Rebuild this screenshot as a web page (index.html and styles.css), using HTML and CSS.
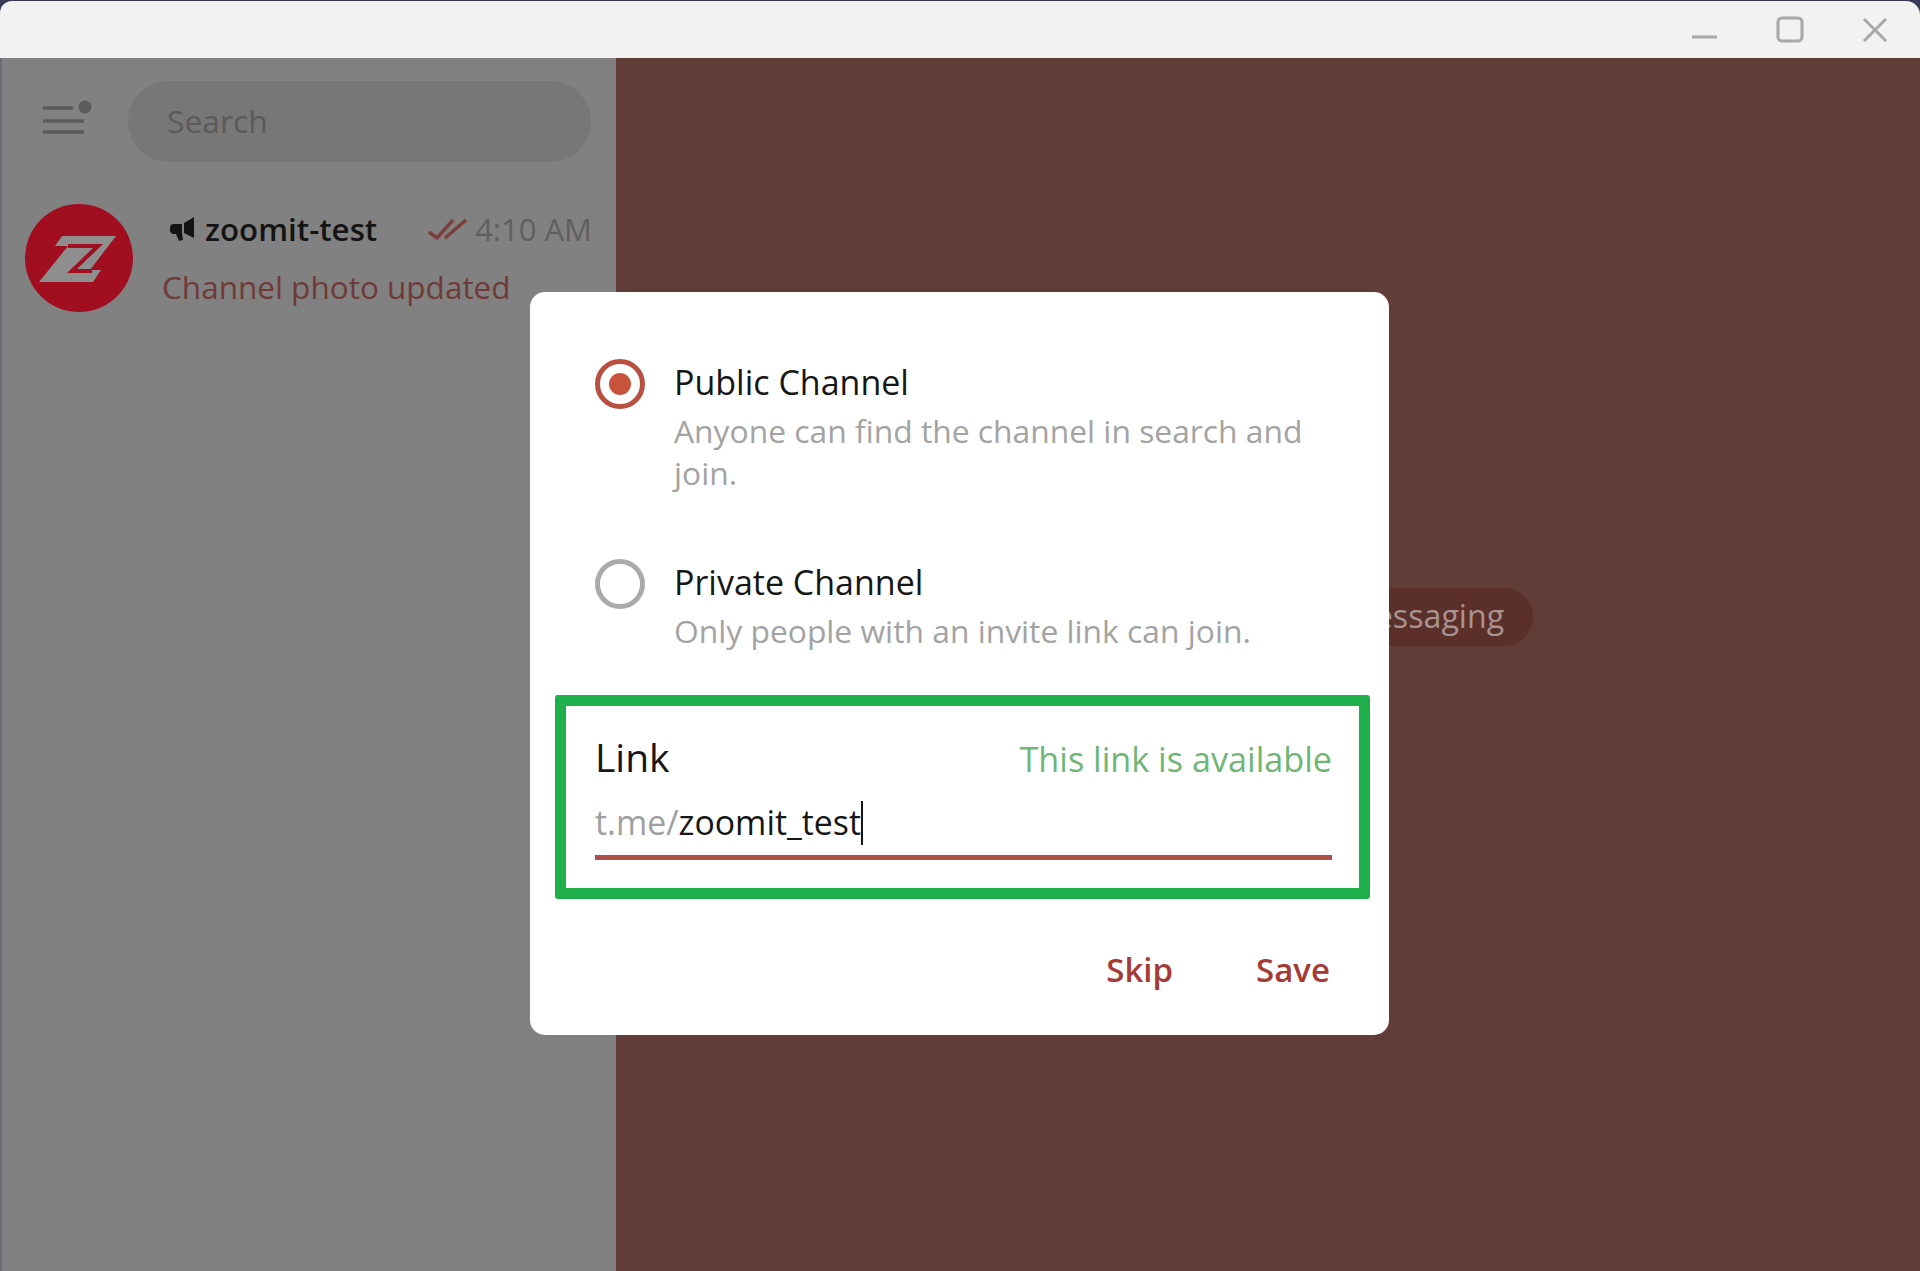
FILE: index.html
```html
<!DOCTYPE html>
<html lang="en">
<head>
<meta charset="utf-8">
<title>Telegram - Channel type</title>
<link rel="stylesheet" href="styles.css">
</head>
<body>
<div class="window">
  <header class="titlebar">
    <button class="win-btn" aria-label="Minimize"><svg width="28" height="28" viewBox="0 0 28 28"><path d="M1 21H26" class="win-stroke"/></svg></button>
    <button class="win-btn" aria-label="Maximize"><svg width="28" height="28" viewBox="0 0 28 28"><rect x="2" y="2" width="24" height="23" rx="4" class="win-stroke"/></svg></button>
    <button class="win-btn" aria-label="Close"><svg width="28" height="28" viewBox="0 0 28 28"><path d="M3 3L25 25M25 3L3 25" class="win-stroke"/></svg></button>
  </header>
  <div class="content">
    <aside class="sidebar">
      <div class="topbar">
        <svg class="menu-icon" width="50" height="40" viewBox="0 0 50 40"><path d="M0 9H30M0 22H41M0 33H41" class="menu-lines"/><circle cx="42" cy="8" r="6.5" class="menu-dot"/></svg>
        <div class="search">Search</div>
      </div>
      <div class="chat-row">
        <svg class="avatar" width="108" height="108" viewBox="0 0 108 108">
          <circle cx="54" cy="54" r="54" class="avatar-bg"/>
          <path d="M37 32H91L65 66H76L68 78H14L43 42H30Z" class="avatar-z"/>
          <path d="M43 42H73L47 67H67" class="avatar-line"/>
        </svg>
        <div class="chat-text">
          <div class="chat-head">
            <svg class="channel-icon" width="26" height="26" viewBox="0 0 26 26"><path d="M25 1V22L15 17V7Z" class="icon-dark"/><path d="M1 12a4 4 0 0 1 4-4h8v10H5a4 4 0 0 1-4-4Z" class="icon-dark"/><path d="M7 18h6l1 6-4 1Z" class="icon-dark"/></svg>
            <span class="chat-name">zoomit-test</span>
            <svg class="checks" width="40" height="24" viewBox="0 0 40 24"><path d="M1 15L9 21 25 3M17 21L38 3" class="check-lines"/></svg>
            <span class="chat-time">4:10 AM</span>
          </div>
          <div class="chat-preview">Channel photo updated</div>
        </div>
      </div>
    </aside>
    <main class="main">
      <span class="service-pill">Select a chat to start messaging</span>
    </main>
  </div>
  <section class="dialog">
    <div class="option option-first">
      <span class="radio radio-on"></span>
      <div>
        <div class="option-title">Public Channel</div>
        <div class="option-desc">Anyone can find the channel in search and join.</div>
      </div>
    </div>
    <div class="option option-second">
      <span class="radio"></span>
      <div>
        <div class="option-title">Private Channel</div>
        <div class="option-desc">Only people with an invite link can join.</div>
      </div>
    </div>
    <div class="link-box">
      <div class="link-head">
        <span class="link-label">Link</span>
        <span class="link-status">This link is available</span>
      </div>
      <div class="link-field"><span class="link-prefix">t.me/</span><span class="link-value">zoomit_test</span><span class="caret"></span></div>
    </div>
    <div class="actions">
      <button class="action">Skip</button>
      <button class="action">Save</button>
    </div>
  </section>
</div>
</body>
</html>
```
FILE: styles.css
```css
* { box-sizing: border-box; }
html, body { margin: 0; height: 100%; overflow: hidden; background: #3a3a58; }
body { font-family: "Open Sans", "Noto Sans", sans-serif; }
.window { position: relative; width: 1920px; height: 1271px; display: flex; flex-direction: column; padding-top: 1px; }

.titlebar { height: 57px; flex: none; background: #f2f2f2; border-radius: 12px 14px 0 0; display: flex; justify-content: flex-end; align-items: flex-start; padding: 15px 31px 0 0; gap: 57px; }
.win-btn { width: 28px; height: 28px; padding: 0; border: 0; background: none; }
.win-btn svg { display: block; }
.win-stroke { fill: none; stroke: #a8a8a8; stroke-width: 3; }

.content { flex: 1; display: flex; min-height: 0; }
.sidebar { width: 616px; flex: none; background: #818181; border-left: 2px solid #6b6b75; }
.topbar { height: 127px; display: flex; align-items: center; padding: 0 25px 0 40px; gap: 34px; }
.menu-icon { flex: none; overflow: visible; margin-top: -6px; width: 52px; }
.menu-lines { fill: none; stroke: #5b5b5b; stroke-width: 3.5; }
.menu-dot { fill: #5b5b5b; }
.search { flex: 1; height: 81px; background: #777; border-radius: 41px; padding-left: 39px; font-size: 31.8px; line-height: 79px; color: #5a5a5a; margin-top: -1px; }

.chat-row { display: flex; padding: 19px 24px 0 23px; gap: 29px; }
.avatar { flex: none; }
.avatar-bg { fill: #a00e20; }
.avatar-z { fill: #8e8e8e; }
.avatar-line { fill: none; stroke: #a00e20; stroke-width: 4; }
.chat-text { flex: 1; min-width: 0; }
.chat-head { display: flex; align-items: center; height: 44px; padding-left: 7px; margin-top: 3px; }
.channel-icon { flex: none; }
.icon-dark { fill: #141414; }
.chat-name { margin-left: 10px; font-size: 31.3px; font-weight: 600; color: #141414; line-height: 44px; }
.checks { flex: none; margin-left: auto; }
.check-lines { fill: none; stroke: #7a3f3d; stroke-width: 3.5; }
.chat-time { margin-left: 7px; font-size: 31px; color: #5f5f5f; line-height: 44px; }
.chat-preview { margin-top: 14px; font-size: 31.5px; line-height: 44px; color: #6f3a37; }

.main { flex: 1; background: #623c36; display: flex; align-items: center; justify-content: center; padding-bottom: 95px; }
.service-pill { height: 58px; line-height: 56px; padding: 0 29px; border-radius: 29px; background: #5b2f2a; color: #a99390; font-size: 32.2px; white-space: nowrap; }

.dialog { position: absolute; left: 530px; top: 292px; width: 859px; height: 743px; background: #fff; border-radius: 15px; padding-left: 25px; padding-right: 19px; display: flex; flex-direction: column; }
.option { display: flex; gap: 29px; padding-left: 40px; }
.option-first { margin-top: 64px; height: 181px; }
.option-second { margin-top: 19px; height: 139px; }
.option-title { font-size: 34px; line-height: 46px; color: #161616; padding-top: 3px; }
.radio { flex: none; width: 50px; height: 50px; border-radius: 50%; border: 5px solid #aaa; margin-top: 3px; position: relative; }
.radio-on { border-color: #b9503f; }
.radio-on::after { content: ""; position: absolute; inset: 9px; border-radius: 50%; background: #c9533a; }
.option-desc { font-size: 31.8px; line-height: 42px; margin-top: 5px; color: #a3a3a3; width: 680px; }

.link-box { height: 204px; border: 11px solid #1fb04c; border-radius: 3px; padding: 27px 27px 0 29px; flex: none; }
.link-head { display: flex; justify-content: space-between; align-items: center; height: 46px; }
.link-label { font-size: 39px; color: #161616; }
.link-status { font-size: 34.2px; color: #6fb576; padding-top: 4px; }
.link-field { margin-top: 21px; height: 60px; border-bottom: 5px solid #ae4f48; font-size: 33.8px; line-height: 44px; display: flex; align-items: flex-start; }
.link-prefix { color: #a0a0a0; }
.link-value { color: #161616; }
.caret { width: 2px; height: 44px; background: #161616; margin-top: 1px; }

.actions { display: flex; justify-content: flex-end; gap: 83px; padding: 48px 40px 0 0; }
.action { padding: 0; border: 0; background: none; font-family: inherit; font-size: 33px; font-weight: 600; line-height: 46px; color: #a63a35; }
```
